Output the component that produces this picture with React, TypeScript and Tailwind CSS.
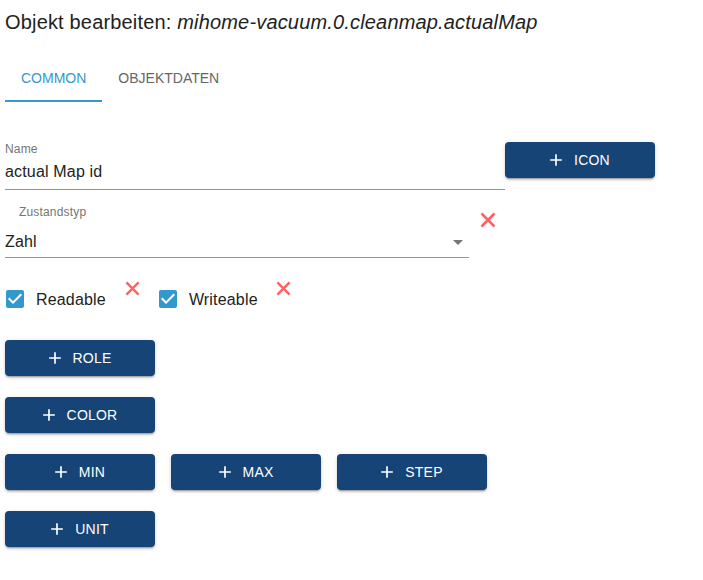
import React, { useState } from "react"

const font = "font-['Liberation_Sans',Arial,sans-serif]"

// thick red cross used for the "remove" actions
const CloseIcon = ({ size = 16, className = "" }: { size?: number; className?: string }) => (
    <svg viewBox="0 0 16 16" className={className} width={size} height={size}>
        <path
            stroke="#ff6262"
            strokeWidth={2.6}
            d="M1.5 1.5L14.5 14.5M14.5 1.5L1.5 14.5"
        />
    </svg>
)

const CheckboxIcon = ({ checked }: { checked: boolean }) => (
    <svg viewBox="0 0 24 24" width={24} height={24}>
        {checked ? (
            <>
                <rect x="4" y="4" width="16" height="16" fill="#fff" />
                <path
                    fill="#3399cc"
                    d="M19 3H5c-1.11 0-2 .9-2 2v14c0 1.1.89 2 2 2h14c1.11 0 2-.9 2-2V5c0-1.1-.89-2-2-2zm-9 14l-5-5 1.41-1.41L10 14.17l7.59-7.59L19 8l-9 9z"
                />
            </>
        ) : (
            <path
                fill="#757575"
                d="M19 5v14H5V5h14m0-2H5c-1.1 0-2 .9-2 2v14c0 1.1.9 2 2 2h14c1.1 0 2-.9 2-2V5c0-1.1-.9-2-2-2z"
            />
        )}
    </svg>
)

const AddButton = ({ label }: { label: string }) => (
    <button
        type="button"
        className="flex items-center justify-center w-[150px] h-[36px] rounded bg-[#164477] text-white text-[14px] leading-[24px] uppercase tracking-[0.2px] shadow-[0_3px_1px_-2px_rgba(0,0,0,0.2),0_2px_2px_0_rgba(0,0,0,0.14),0_1px_5px_0_rgba(0,0,0,0.12)]"
    >
        <svg viewBox="0 0 24 24" width={20} height={20} className="-ml-1 mr-2">
            <path fill="currentColor" d="M19 13h-6v6h-2v-6H5v-2h6V5h2v6h6v2z" />
        </svg>
        {label}
    </button>
)

const App = () => {
    const [tab, setTab] = useState(0)
    const [readable, setReadable] = useState(true)
    const [writeable, setWriteable] = useState(true)

    return (
        <div className={`${font} w-[703px] min-h-[580px] bg-white pl-[5px] text-[#222] tracking-[0.17px]`}>
            <div className="pt-[10px] text-[20px] leading-[24px]">
                Objekt bearbeiten: <i>mihome-vacuum.0.cleanmap.actualMap</i>
            </div>

            {/* tabs */}
            <div className="mt-[20px] flex h-[48px]">
                {["Common", "Objektdaten"].map((name, i) => (
                    <button
                        key={name}
                        type="button"
                        onClick={() => setTab(i)}
                        className={
                            "px-4 pt-[2px] border-b-2 text-[14px] uppercase tracking-normal " +
                            (tab === i
                                ? "border-[#3399cc] text-[#3399cc]"
                                : "border-transparent text-[#666]")
                        }
                    >
                        {name}
                    </button>
                ))}
            </div>

            {/* name + icon */}
            <div className="mt-[40px] flex items-start">
                <div className="w-[500px]">
                    <div className="text-[12px] leading-[14px] text-[#757575]">
                        Name
                    </div>
                    <div className="mt-[6px] text-[16px] leading-[19px] pb-[8px] border-b border-[#949494]">
                        actual Map id
                    </div>
                </div>
                <AddButton label="Icon" />
            </div>

            {/* state type select */}
            <div className="mt-[15px] flex items-start">
                <div className="w-[464px]">
                    <div className="pl-[14px] text-[12px] leading-[14px] text-[#757575]">
                        Zustandstyp
                    </div>
                    <div className="mt-[13px] flex items-start justify-between pb-[6px] border-b border-[#949494]">
                        <span className="text-[16px] leading-[19px]">Zahl</span>
                        <svg viewBox="7 10 10 5" width={10} height={5} className="mt-[8px] mr-[6px]">
                            <path fill="#757575" d="M7 10l5 5 5-5z" />
                        </svg>
                    </div>
                </div>
                <CloseIcon className="ml-[11px] mt-[7px]" />
            </div>

            {/* flags */}
            <div className="mt-[23px] flex items-start text-[16px] leading-[19px]">
                <label
                    className="mt-[6px] -ml-[2px] flex items-center cursor-pointer"
                    onClick={() => setReadable(!readable)}
                >
                    <CheckboxIcon checked={readable} />
                    <span className="ml-[9px]">Readable</span>
                </label>
                <CloseIcon size={15} className="ml-[19px]" />
                <label
                    className="mt-[6px] ml-[16px] flex items-center cursor-pointer"
                    onClick={() => setWriteable(!writeable)}
                >
                    <CheckboxIcon checked={writeable} />
                    <span className="ml-[9px]">Writeable</span>
                </label>
                <CloseIcon size={15} className="ml-[18px]" />
            </div>

            <div className="mt-[29px] flex flex-col gap-[21px]">
                <AddButton label="Role" />
                <AddButton label="Color" />
                <div className="flex gap-4">
                    <AddButton label="Min" />
                    <AddButton label="Max" />
                    <AddButton label="Step" />
                </div>
                <AddButton label="Unit" />
            </div>
        </div>
    )
}

export default App
